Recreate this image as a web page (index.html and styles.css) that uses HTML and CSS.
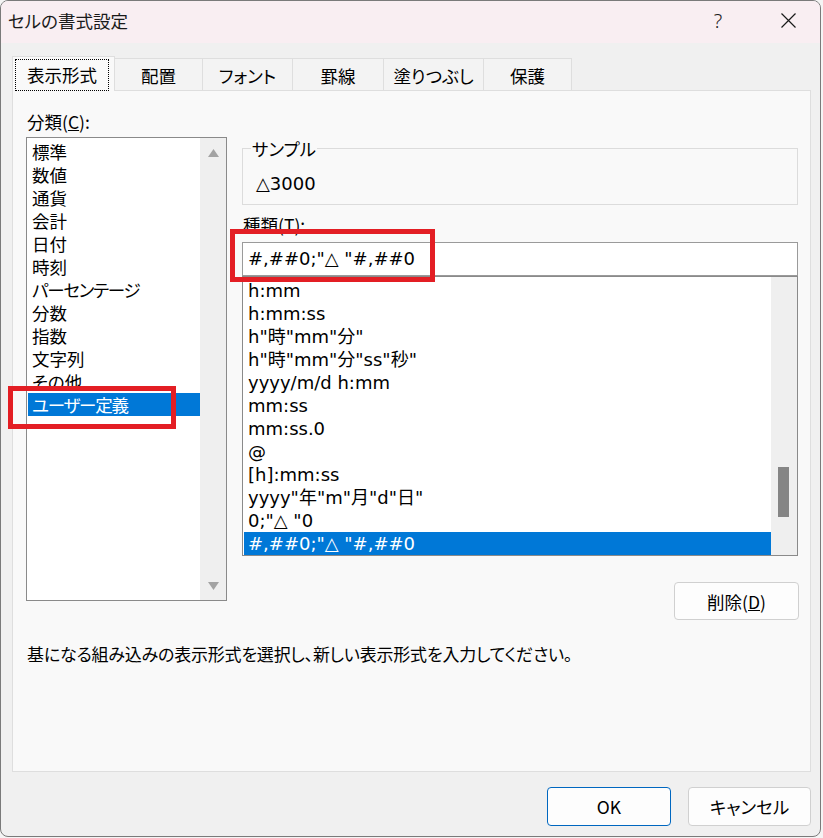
FILE: index.html
```html
<!DOCTYPE html>
<html lang="ja">
<head>
<meta charset="utf-8">
<title>セルの書式設定</title>
<link rel="stylesheet" href="styles.css">
</head>
<body>
<div class="window">
  <div class="titlebar">
    <span class="title">セルの書式設定</span>
    <span class="help">?</span>
    <svg class="close" width="15" height="15" viewBox="0 0 15 15"><path d="M0.5 0.5 L14.5 14.5 M14.5 0.5 L0.5 14.5" stroke="#1a1a1a" stroke-width="1.2" fill="none"/></svg>
  </div>
  <div class="body">
    <div class="tabs">
      <div class="tab active"><span class="focus">表示形式</span></div>
      <div class="tab t-haichi">配置</div>
      <div class="tab t-font">フォント</div>
      <div class="tab t-keisen">罫線</div>
      <div class="tab t-nuri">塗りつぶし</div>
      <div class="tab t-hogo">保護</div>
    </div>
    <div class="panel">
      <div class="columns">
        <div class="left">
          <div class="label">分類(<u>C</u>):</div>
          <div class="listbox cat">
            <ul class="items">
              <li>標準</li>
              <li>数値</li>
              <li>通貨</li>
              <li>会計</li>
              <li>日付</li>
              <li>時刻</li>
              <li class="kana">パーセンテージ</li>
              <li>分数</li>
              <li>指数</li>
              <li>文字列</li>
              <li>その他</li>
              <li class="sel kana">ユーザー定義</li>
            </ul>
            <div class="vscroll arrows">
              <svg width="11" height="8" viewBox="0 0 11 8"><path d="M5.5 0 L11 8 L0 8 Z" fill="#a3a3a3"/></svg>
              <svg width="11" height="8" viewBox="0 0 11 8"><path d="M0 0 L11 0 L5.5 8 Z" fill="#a3a3a3"/></svg>
            </div>
          </div>
        </div>
        <div class="right">
          <fieldset class="sample">
            <legend>サンプル</legend>
            <div class="sample-value">△3000</div>
          </fieldset>
          <div class="label type-label">種類(<u>T</u>):</div>
          <div class="input">#,##0;"△ "#,##0</div>
          <div class="listbox fmt">
            <ul class="items">
              <li>h:mm</li>
              <li>h:mm:ss</li>
              <li>h"時"mm"分"</li>
              <li>h"時"mm"分"ss"秒"</li>
              <li>yyyy/m/d h:mm</li>
              <li>mm:ss</li>
              <li>mm:ss.0</li>
              <li>@</li>
              <li>[h]:mm:ss</li>
              <li>yyyy"年"m"月"d"日"</li>
              <li>0;"△ "0</li>
              <li class="sel">#,##0;"△ "#,##0</li>
            </ul>
            <div class="vscroll"><div class="thumb"></div></div>
          </div>
          <div class="btnrow"><button class="btn delete">削除(<u>D</u>)</button></div>
        </div>
      </div>
      <p class="desc">基になる組み込みの表示形式を選択し、新しい表示形式を入力してください。</p>
    </div>
    <div class="footer">
      <button class="btn ok">OK</button>
      <button class="btn cancel">キャンセル</button>
    </div>
  </div>
  <div class="mark mark-cat"></div>
  <div class="mark mark-type"></div>
</div>
</body>
</html>
```

FILE: styles.css
```css
html, body {
  margin: 0;
  padding: 0;
}
body {
  background: #f4f4f4;
  width: 823px;
  height: 838px;
  overflow: hidden;
  font-family: "Noto Sans CJK JP", "Noto Sans", sans-serif;
  font-feature-settings: "palt";
  font-size: 17.5px;
  color: #000;
}
.window {
  position: relative;
  box-sizing: border-box;
  width: 821px;
  height: 837px;
  border: 1px solid #7a7a7a;
  border-radius: 8px;
  overflow: hidden;
  background: #f0f0f0;
  display: flex;
  flex-direction: column;
}
.titlebar {
  box-sizing: border-box;
  height: 42px;
  flex: none;
  background: #f9eef2;
  display: flex;
  align-items: center;
  padding: 0 0 3px 7px;
}
.title {
  font-size: 17.5px;
  line-height: 23px;
  color: #1a1a1a;
}
.help {
  margin-left: auto;
  width: 20px;
  text-align: center;
  font-family: "Noto Sans", sans-serif;
  font-weight: 300;
  font-size: 20px;
  line-height: 23px;
  color: #1a1a1a;
}
.close {
  display: block;
  margin-left: 53px;
  margin-right: 24px;
}
.body {
  flex: 1;
  display: flex;
  flex-direction: column;
  padding: 13px 9px 0 11px;
}
.tabs {
  display: flex;
  align-items: flex-end;
  height: 35px;
  margin-bottom: -1px;
  position: relative;
  z-index: 1;
}
.tab {
  box-sizing: border-box;
  height: 32px;
  margin-bottom: 1px;
  margin-left: -1px;
  border: 1px solid #dedede;
  border-bottom: none;
  background: #f3f3f3;
  display: flex;
  align-items: center;
  justify-content: center;
  line-height: 23px;
  padding-top: 1px;
}
.tab.active {
  margin-left: 0;
  width: 103px;
  height: 35px;
  margin-bottom: 0;
  background: #f9f9f9;
  padding: 2px 5px 0 2px;
  align-items: stretch;
}
.focus {
  flex: 1;
  border: 1px dotted #000;
  display: flex;
  align-items: center;
  justify-content: center;
  padding-bottom: 1px;
}
.t-haichi { width: 89px; }
.t-font { width: 91px; }
.t-keisen { width: 92px; }
.t-nuri { width: 101px; }
.t-hogo { width: 89px; }

.panel {
  box-sizing: border-box;
  height: 682px;
  flex: none;
  border: 1px solid #dedede;
  background: #f9f9f9;
  padding: 19px 12px 0 13px;
}
.columns {
  display: grid;
  grid-template-columns: 201px 556px;
  column-gap: 15px;
  align-items: start;
}
.label {
  line-height: 23px;
  padding-left: 1px;
}
.listbox {
  box-sizing: border-box;
  border: 1px solid #8a8a8a;
  background: #fff;
  display: flex;
}
.listbox.cat {
  margin-top: 4px;
  height: 464px;
}
.items {
  list-style: none;
  margin: 0;
  padding: 2px 0 0 1px;
  flex: 1;
  min-width: 0;
}
.items li {
  height: 23px;
  line-height: 23px;
  padding-left: 4px;
  white-space: pre;
}
.items li.kana {
  letter-spacing: -1.2px;
}
.items li.sel {
  background: #0078d7;
  color: #fff;
}
.vscroll {
  width: 26px;
  flex: none;
  background: #efefef;
  position: relative;
}
.vscroll.arrows {
  display: flex;
  flex-direction: column;
  justify-content: space-between;
  align-items: center;
  padding: 11px 0 10px;
  box-sizing: border-box;
}
.vscroll.arrows svg {
  display: block;
}
.right {
  padding-top: 27px;
}
.sample {
  margin: 0;
  border: 1px solid #dcdcdc;
  padding: 12px 0 9px 13px;
  min-width: 0;
}
.sample legend {
  padding: 0 1px;
  margin-left: -5px;
  line-height: 23px;
}
.sample-value,
.input,
.fmt .items li {
  font-family: "DejaVu Sans", "Noto Sans CJK JP", sans-serif;
  font-feature-settings: normal;
  font-size: 18px;
  letter-spacing: 0;
}
.sample-value {
  line-height: 23px;
  white-space: pre;
}
.type-label {
  margin-top: 8px;
}
.input {
  box-sizing: border-box;
  margin-top: 6px;
  height: 34px;
  border: 1px solid #9a9a9a;
  background: #fff;
  line-height: 31px;
  padding-left: 5px;
  white-space: pre;
}
.listbox.fmt {
  height: 280px;
}
.fmt .items {
  padding-top: 2px;
}
.fmt .thumb {
  position: absolute;
  left: 7px;
  top: 190px;
  width: 11px;
  height: 50px;
  background: #858585;
}
.btnrow {
  display: flex;
  justify-content: flex-end;
  margin-top: 26px;
}
.btn {
  box-sizing: border-box;
  font-family: "Noto Sans CJK JP", "Noto Sans", sans-serif;
  font-feature-settings: "palt";
  font-size: 17.5px;
  color: #000;
  background: #fdfdfd;
  border: 1px solid #d0d0d0;
  border-radius: 4px;
  padding: 0;
  line-height: 23px;
}
.delete {
  width: 125px;
  height: 38px;
  margin-right: -1px;
}
.desc {
  margin: 22px 0 0 1px;
  line-height: 23px;
  font-size: 17px;
  letter-spacing: -0.2px;
  white-space: nowrap;
}
.footer {
  display: flex;
  justify-content: flex-end;
  gap: 17px;
  margin-top: 15px;
}
.footer .btn {
  height: 39px;
}
.ok {
  width: 124px;
  border-color: #0067c0;
  background: #fdfdfd;
}
.cancel {
  width: 123px;
}
.mark {
  position: absolute;
  box-sizing: border-box;
  border: 5px solid #e31e24;
  z-index: 5;
}
.mark-cat {
  left: 7px;
  top: 385px;
  width: 168px;
  height: 43px;
}
.mark-type {
  left: 229px;
  top: 228px;
  width: 205px;
  height: 53px;
}
```
